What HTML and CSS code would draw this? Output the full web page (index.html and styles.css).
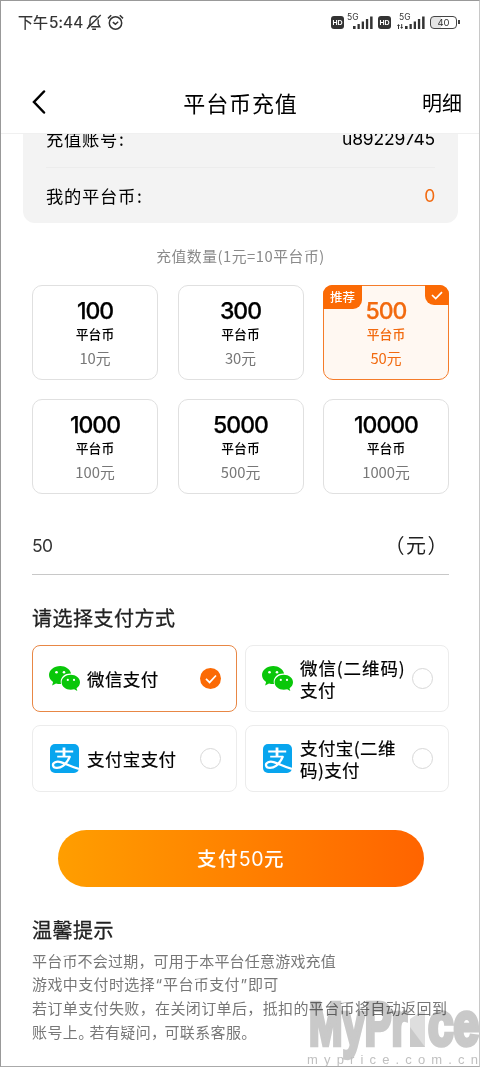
FILE: index.html
```html
<!DOCTYPE html>
<html lang="zh-CN">
<head>
<meta charset="utf-8">
<title>平台币充值</title>
<link rel="stylesheet" href="styles.css">
</head>
<body>
<svg class="defs" width="0" height="0">
  <symbol id="wechat" viewBox="0 0 32 26">
    <path fill="#09c709" d="M11.3 0C5 0 0 4 0 9.1c0 2.900 1.600 5.300 4.100 7l-1 3.300 3.900-2c1.400.4 2.800.6 4.300.6h.8c-.3-.8-.4-1.500-.4-2.300 0-4.600 4.200-8.100 9.500-8.100h.9C21.100 3.200 16.600 0 11.300 0z"/>
    <path fill="#09c709" d="M31 16.300c0-4.200-4.100-7.500-9.200-7.500s-9.200 3.300-9.200 7.500 4.100 7.500 9.200 7.500c1.200 0 2.400-.2 3.400-.5l3.100 1.700-.8-2.700c2.100-1.400 3.500-3.600 3.500-6z"/>
    <g fill="#fff"><circle cx="7.500" cy="6.200" r="1.300"/><circle cx="15" cy="6.200" r="1.300"/><circle cx="18.800" cy="13.900" r="1.100"/><circle cx="25" cy="13.900" r="1.100"/></g>
  </symbol>
  <symbol id="alipay" viewBox="0 0 29 29">
    <rect width="29" height="29" rx="5" fill="#08a5ee"/>
    <g fill="none" stroke="#fff">
      <path stroke-width="1.900" d="M5.200 7.500h18M7.200 12.600h13"/>
      <path stroke-width="2.800" d="M14 3.500V12.500"/>
      <path stroke-width="2.300" d="M20 12.200c-1.500 4.200-4 7.400-7 9.700-3.500 2.600-9.500 3-10 -.6-.4-2.700 3.500-4.500 7.700-3.200C16 19.700 21 22.800 29 25"/>
    </g>
  </symbol>
  <symbol id="signal" viewBox="0 0 20 13">
    <path fill="#333" d="M0 10h2.600v3H0zM4.500 8h2.300v5H4.500zM8.700 5.500H11V13H8.700zM12.900 3h2.300v10h-2.300zM17.100.5h2.500V13h-2.500z"/>
  </symbol>
</svg>
<div class="screen">
  <div class="status">
    <span class="clock">下午<span class="time">5:44</span></span>
    <svg class="bell" viewBox="0 0 16 17"><g fill="none" stroke="#333" stroke-width="1.400"><path d="M2.500 12.500 4 10V6.500C4 4 5.500 2.300 8 2.300c1 0 2 .3 2.700 1M12.200 5.500V10l1.600 2.800H5.200M1 14.800 14.700 1M6.200 15.200h3.800"/></g></svg>
    <svg class="alarm" viewBox="0 0 17 17"><g fill="none" stroke="#333" stroke-width="1.500"><circle cx="8.500" cy="9" r="6.200"/><path d="M5.800 8.200 8.400 10.200 11.200 7.800M1 4.400 4.200 1.300M12.800 1.300 16 4.400"/></g></svg>
    <span class="spacer"></span>
    <span class="hd">HD</span>
    <span class="net"><span class="gen">5G</span><svg class="bars"><use href="#signal"/></svg></span>
    <span class="hd">HD</span>
    <span class="net net-wide"><span class="gen">5G</span><svg class="arrows" viewBox="0 0 6 5"><path fill="#333" d="M0 2 1.500 0 3 2H2v3H1V2zM3.200 3h1V0h1v3h1L4.700 5z"/></svg><svg class="bars"><use href="#signal"/></svg></span>
    <span class="battery">40</span><span class="battery-tip"></span>
  </div>
  <header class="nav">
    <svg class="back" viewBox="0 0 14 24"><path d="M12 1.500 2 12l10 10.500" fill="none" stroke="#000" stroke-width="2.500" stroke-linecap="round"/></svg>
    <h1>平台币充值</h1>
    <span class="detail">明细</span>
  </header>
  <main class="content">
    <section class="account">
      <div class="row"><span>充值账号<i class="colon">:</i></span><span class="num">u89229745</span></div>
      <div class="row"><span>我的平台币<i class="colon">:</i></span><span class="num accent">0</span></div>
    </section>
    <p class="caption">充值数量(1元=10平台币)</p>
    <section class="amounts">
      <div class="amount"><b>100</b><span class="unit">平台币</span><span class="price">10元</span></div>
      <div class="amount"><b>300</b><span class="unit">平台币</span><span class="price">30元</span></div>
      <div class="amount selected"><b>500</b><span class="unit">平台币</span><span class="price">50元</span>
        <span class="tag">推荐</span>
        <span class="tick"><svg viewBox="0 0 12 9"><path d="M1 4l3.700 3.500L11 1.200" fill="none" stroke="#fff" stroke-width="1.700"/></svg></span>
      </div>
      <div class="amount"><b>1000</b><span class="unit">平台币</span><span class="price">100元</span></div>
      <div class="amount"><b>5000</b><span class="unit">平台币</span><span class="price">500元</span></div>
      <div class="amount"><b>10000</b><span class="unit">平台币</span><span class="price">1000元</span></div>
    </section>
    <div class="field"><span class="value">50</span><span class="yuan">（元）</span></div>
    <h2 class="pay-title">请选择支付方式</h2>
    <section class="methods">
      <div class="method chosen"><svg class="wx"><use href="#wechat"/></svg><span class="label">微信支付</span><span class="radio on"><svg viewBox="0 0 12 10"><path d="M1 4.800l3.600 3.600L11 1.500" fill="none" stroke="#fff" stroke-width="1.700"/></svg></span></div>
      <div class="method"><svg class="wx"><use href="#wechat"/></svg><span class="label"><span class="loose">微信(二维码)</span><br>支付</span><span class="radio"></span></div>
      <div class="method"><svg class="ali"><use href="#alipay"/></svg><span class="label">支付宝支付</span><span class="radio"></span></div>
      <div class="method"><svg class="ali"><use href="#alipay"/></svg><span class="label">支付宝(二维<br>码)支付</span><span class="radio"></span></div>
    </section>
    <button class="submit">支付<span class="sum">50</span>元</button>
    <h2 class="tips-title">温馨提示</h2>
    <div class="tips">
      <p class="tight">平台币不会过期，可用于本平台任意游戏充值</p>
      <p>游戏中支付时选择<span class="quote">“</span>平台币支付<span class="quote">”</span>即可</p>
      <p>若订单支付失败，在关闭订单后，抵扣的平台币将自动返回到</p>
      <p>账号上<span class="stop">。</span>若有疑问<span class="comma">，</span>可联系客服。</p>
    </div>
  </main>
  <svg class="watermark" viewBox="0 0 174 72">
    <g class="mark" fill="#c9c9c9" stroke="#c9c9c9" stroke-width="4.500">
      <text x="3" y="46" font-size="61" textLength="98" lengthAdjust="spacingAndGlyphs">MyPr</text>
      <text x="122" y="46" font-size="61" textLength="51" lengthAdjust="spacingAndGlyphs">ce</text>
    </g>
    <path fill="#dedede" d="M104 20 119 10V48H104z"/>
    <path fill="#c9c9c9" d="M104 48V28L119 48z"/>
    <text class="site" x="1" y="65" font-size="13" fill="#c0c0c0" textLength="171">myprice.com.cn</text>
  </svg>
</div>
</body>
</html>
```
FILE: styles.css
```css
* { box-sizing: border-box; }
body { margin: 0; background: #fff; color: #111; font-family: "Noto Sans CJK SC", sans-serif; }
h1, h2, p { margin: 0; font-weight: 400; }
.defs { position: absolute; }
.screen { position: relative; width: 480px; height: 1067px; overflow: hidden; border: 1px solid #aaa; border-top-color: #999; border-left-color: #999; border-right-color: #c8c8c8; white-space: nowrap; }

.status { display: flex; align-items: center; height: 42px; padding: 0 19px 0 17px; color: #333; }
.clock { width: 67px; font-size: 15px; line-height: 20px; -webkit-text-stroke: .2px #333; }
.time { font-family: Inter, sans-serif; font-size: 15.500px; letter-spacing: .1px; margin-left: 1px; }
.bell { width: 16px; height: 17px; margin-left: 1px; }
.alarm { width: 17px; height: 17px; margin-left: 5px; }
.spacer { flex: 1; }
.hd { width: 13px; height: 13px; border-radius: 3px; background: #333; color: #fff; font: bold 7px/13px "Liberation Sans", sans-serif; text-align: center; }
.net { position: relative; width: 34px; height: 16px; }
.gen { position: absolute; left: 3px; top: -1px; font: 8.500px/9px Inter, sans-serif; }
.bars { position: absolute; right: 5px; bottom: 1px; width: 20px; height: 13px; }
.net-wide { width: 39px; }
.net-wide .gen { left: 8px; }
.arrows { position: absolute; left: 6px; bottom: 1px; width: 6px; height: 5px; }
.battery { width: 27px; height: 13px; border: 1.500px solid #444; border-radius: 4px; background: linear-gradient(90deg, #e4e4e4 40%, #fff 40%); font: 9.500px/11px Inter, sans-serif; text-align: center; }
.battery-tip { width: 2px; height: 4px; background: #444; margin-left: 1px; }

.nav { display: flex; justify-content: space-between; align-items: center; height: 91px; padding: 28px 17px 0 31px; border-bottom: 1px solid #f0f0f0; background: #fff; }
.back { width: 14px; height: 24px; }
.nav h1 { margin-left: 13px; font-size: 22px; letter-spacing: .9px; color: #000; }
.detail { font-size: 20px; color: #000; }

.content { height: 932px; overflow: hidden; padding: 0 30px 0 31px; }
.account { margin: -23px -9px 0; padding: 0 23px; border-radius: 12px; background: #f3f3f3; font-size: 17.300px; letter-spacing: .7px; color: #000; }
.row { display: flex; justify-content: space-between; align-items: center; height: 56px; padding-bottom: 2px; }
.row + .row { border-top: 1px solid #ececec; padding-bottom: 1px; }
.colon { font-style: normal; margin-left: 1px; }
.num { font-family: Inter, sans-serif; font-size: 17.500px; letter-spacing: -.2px; }
.accent { color: #f26b12; }

.caption { margin-top: 22px; height: 40px; line-height: 21px; text-align: center; font-size: 14.800px; letter-spacing: .52px; color: #8a8a8a; }
.amounts { display: grid; grid-template-columns: repeat(3, 126px); justify-content: space-between; row-gap: 19px; }
.amount { position: relative; display: flex; flex-direction: column; align-items: center; height: 95px; padding-top: 13px; border: 1px solid #e0e0e0; border-radius: 10px; color: #000; }
.amount b { font-family: Inter, sans-serif; font-size: 23px; line-height: 24px; font-weight: 500; letter-spacing: -1px; -webkit-text-stroke: .25px currentColor; }
.unit { font-size: 12.800px; line-height: 22px; font-weight: 500; }
.price { font-size: 14.800px; line-height: 26px; color: #777; }
.selected { border-color: #f57c2a; background: #fff8f2; color: #f26a0f; }
.selected .price { color: #f26a0f; }
.tag { position: absolute; left: -1px; top: -1px; width: 39px; height: 24px; border-radius: 9px 0 9px 0; background: #fb6a05; color: #fff; font-size: 12.500px; line-height: 24px; text-align: center; font-weight: 500; }
.tick { position: absolute; right: -1px; top: -1px; width: 24px; height: 20px; border-radius: 0 9px 0 9px; background: #fb6a05; display: flex; align-items: center; justify-content: center; }
.tick svg { width: 12px; height: 9px; }

.field { display: flex; justify-content: space-between; align-items: center; height: 81px; padding-top: 22px; border-bottom: 1px solid #c8c8c8; }
.field .value { font-family: Inter, sans-serif; font-size: 17.500px; letter-spacing: -.6px; color: #333; }
.yuan { font-size: 20px; font-feature-settings: "halt"; letter-spacing: 1.500px; margin: -2px 10px 0 0; color: #222; }

.pay-title { margin-top: 28px; height: 42px; line-height: 30px; font-size: 20px; letter-spacing: .5px; color: #222; -webkit-text-stroke: .3px #222; }
.methods { display: grid; grid-template-columns: 205px 204px; justify-content: space-between; row-gap: 13px; }
.method { display: flex; align-items: center; height: 67px; padding: 0 15px 0 16px; border: 1px solid #ececec; border-radius: 8px; color: #000; }
.chosen { border-color: #e88745; }
.wx { width: 32px; height: 26px; margin-right: 6px; flex: none; }
.ali { width: 29px; height: 29px; margin: 0 8px 0 1px; flex: none; }
.label { flex: 1; font-size: 17.500px; line-height: 22px; letter-spacing: .4px; -webkit-text-stroke: .2px #000; }
.loose { letter-spacing: .9px; }
.radio { width: 21px; height: 21px; border: 1px solid #d8d8d8; border-radius: 50%; flex: none; }
.on { border: 0; background: #fb6a05; display: flex; align-items: center; justify-content: center; }
.on svg { width: 12px; height: 10px; }

.submit { display: block; width: 366px; height: 57px; margin: 38px 0 0 26px; padding: 0 0 2px; border: 0; border-radius: 29px; background: linear-gradient(90deg, #ff9e00, #ff6400); color: #fff; font: 500 19.500px "Noto Sans CJK SC", sans-serif; letter-spacing: 1.300px; }
.sum { font-family: Inter, sans-serif; font-weight: 400; letter-spacing: .6px; }
.tips-title { margin-top: 28px; line-height: 30px; font-size: 20px; letter-spacing: .5px; color: #222; -webkit-text-stroke: .3px #222; }
.tips { margin-top: 4px; font-size: 15px; line-height: 23.200px; letter-spacing: .38px; color: #777; }
.tight { letter-spacing: .2px; }
.quote { font-family: Inter, sans-serif; margin: 0 .5px; }
.stop { margin-right: -4px; }
.comma { margin-right: -2px; }

.watermark { position: absolute; left: 305px; top: 998px; width: 174px; height: 72px; mix-blend-mode: multiply; }
.mark { font-family: "Liberation Sans", sans-serif; font-weight: bold; }
.site { font-family: "Liberation Sans", sans-serif; }
```
